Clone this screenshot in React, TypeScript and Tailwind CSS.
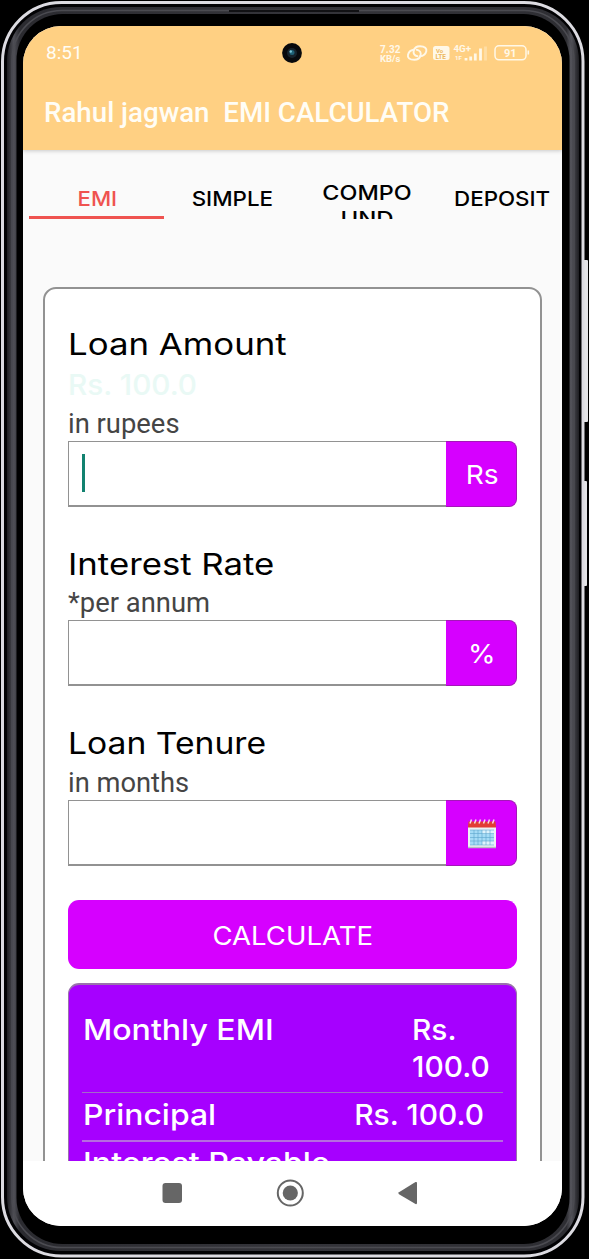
import React from "react";

const FrameSvg = () => (
  <svg className="absolute inset-0 pointer-events-none" width="589" height="1259" viewBox="0 0 589 1259" fill="none">
    <defs>
      <linearGradient id="rail" x1="7" x2="579" y1="0" y2="0" gradientUnits="userSpaceOnUse">
        <stop offset="0" stopColor="#1e1e22" />
        <stop offset=".012" stopColor="#505057" />
        <stop offset=".022" stopColor="#2b2b30" />
        <stop offset=".5" stopColor="#34343a" />
        <stop offset=".978" stopColor="#2e2e33" />
        <stop offset=".986" stopColor="#55555c" />
        <stop offset="1" stopColor="#1e1e22" />
      </linearGradient>
    </defs>
    <rect x="583" y="260" width="5" height="162" rx="1" fill="#e4e4e7" />
    <rect x="583" y="481" width="4" height="105" rx="1" fill="#e4e4e7" />
    <rect x="2.500" y="2.500" width="580.500" height="1253.500" rx="59" fill="#020204" stroke="#dcdbe1" strokeWidth="3" />
    <rect x="7" y="7" width="572" height="1244" rx="54" fill="url(#rail)" />
    <rect x="16.500" y="14" width="553" height="1230" rx="46" fill="#000" />
    <rect x="12" y="10.500" width="562" height="1237" rx="50" stroke="#4b4b51" strokeWidth="1.500" />
    <path d="M229 11h130" stroke="#111114" strokeWidth="2" />
  </svg>
);

const StatusIcons = () => (
  <svg width="152" height="22" viewBox="379 42 152 22" fill="none" stroke="#fff8e8">
    <g fill="#fff8e8" stroke="none" fontFamily="Roboto" fontWeight="700">
      <text x="380" y="53" fontSize="10" textLength="20.500">7.32</text>
      <text x="380" y="62" fontSize="9" textLength="20.500" lengthAdjust="spacingAndGlyphs">KB/s</text>
      <text x="453.500" y="52" fontSize="9.500" textLength="17.500" lengthAdjust="spacingAndGlyphs">4G+</text>
      <text x="455" y="60" fontSize="6">1F</text>
      <text x="504" y="57" fontSize="11" textLength="12.500">91</text>
    </g>
    <g strokeWidth="1.900" strokeLinecap="round">
      <path d="M417.500 56.300C411 55 413 46.300 420 46.300c5 0 7 2.200 6.300 5c-.6 2.500-2.800 4.800-6.300 5" />
      <path d="M416.800 49.800C423.300 51 421.300 59.800 414.300 59.800c-5 0-7-2.200-6.300-5c.6-2.500 2.300-4.500 5.500-5" />
    </g>
    <rect x="433" y="46" width="16.500" height="14" rx="2.500" fill="#fff8e8" stroke="none" />
    <g fill="#edb85f" stroke="none" fontFamily="Roboto" fontWeight="700">
      <text x="436" y="52.500" fontSize="6">Vo</text>
      <text x="435.500" y="59" fontSize="6.500">LTE</text>
    </g>
    <g strokeWidth="2.800">
      <path d="M466 60.500v-2.500M470.700 60.500v-4M475.300 60.500v-7M480.500 60.500v-12" />
      <path d="M485.500 60.500v-14" opacity=".35" />
    </g>
    <rect x="495" y="45.800" width="31" height="14" rx="4" strokeWidth="1.500" />
    <path d="M528.300 50.500v4" strokeWidth="1.600" />
  </svg>
);

const CalendarIcon = () => (
  <svg width="30" height="30" viewBox="0 0 30 30">
    <path d="M1 8h28v20.500H1z" fill="#eef2f5" />
    <path d="M1.500 2.500h27l.5 6H1z" fill="#e23c34" />
    <path d="M3 11h24v15H3z" fill="#a5dcf6" />
    <path d="M15 11h12v4H15zM15 22h12v4H15z" fill="#def3fc" />
    <path d="M3 11h24M3 14.500h24M3 18.500h24M3 22h24M3 26h24M7 11v15M11 11v15M15 11v15M19 11v15M23 11v15" stroke="#5aa5cc" strokeWidth=".6" />
    <path d="M3 4.500l1.500-4M7.500 4.500l1.500-4M12 4.500l1.500-4M16.500 4.500l1.500-4M21 4.500l1.500-4M25.500 4.500l1.500-4" stroke="#f4dce6" strokeWidth="1.500" />
    <path d="M1 28.500h28" stroke="#b7bcc4" strokeWidth="1.500" />
  </svg>
);

const Field = ({ children, focused }: { children: React.ReactNode; focused?: boolean }) => (
  <div className="flex h-[66px] w-[449px]">
    <div className="flex w-[378px] items-center border border-b-2 border-r-0 border-[#929292] pl-[13px]">
      {focused && <div className="mb-[2px] h-[38px] w-[3px] bg-[#128270]" />}
    </div>
    <div className="flex w-[71px] items-center justify-center rounded-r-lg border border-l-0 border-[#a316b8] bg-[#d600ff] pl-[2px] pt-px text-[26px] text-white">
      {children}
    </div>
  </div>
);

export default function App() {
  return (
    <div className="relative h-[1259px] w-[589px] overflow-hidden bg-black pl-[23px] pt-[26px] font-['Inter',sans-serif]">
      <FrameSvg />
      <div className="relative flex h-[1199.500px] w-[539px] flex-col overflow-hidden rounded-[38px] bg-[#fafafa]">
        <header className="relative z-10 h-[124px] shrink-0 bg-[#ffd083] font-['Roboto',sans-serif] text-[#fffdf5] shadow-[0_1px_4px_rgba(0,0,0,0.2)]">
          <div className="flex h-[54px] items-center justify-between pl-[23px] pr-[31px]">
            <span className="pt-px text-[19px]">8:51</span>
            <StatusIcons />
          </div>
          <svg className="absolute left-[259px] top-[17px]" width="20" height="20" viewBox="0 0 20 20">
            <circle cx="10" cy="10" r="9.900" fill="#08090c" />
            <circle cx="10" cy="10" r="5" fill="#17232c" />
            <circle cx="10" cy="9.500" r="2.500" fill="#1f6075" />
            <circle cx="8.700" cy="8.500" r="1.200" fill="#7cc6d8" />
          </svg>
          <h1 className="whitespace-pre pl-[21px] pt-[15px] text-[27.700px] font-medium leading-9">Rahul jagwan  EMI CALCULATOR</h1>
        </header>

        <nav className="flex h-[69px] shrink-0 items-stretch overflow-hidden pl-[6px] pt-[22px] text-[20.500px] font-medium leading-[26px] text-black">
          <div className="flex w-[135px] shrink-0 items-center justify-center border-b-[3px] border-[#ef5350] pl-px pt-[9px] text-[#ef5350]"><span className="scale-x-[1.080]">EMI</span></div>
          <div className="flex w-[135px] shrink-0 items-center justify-center pl-[2px] pt-[6px]"><span className="scale-x-[1.090]">SIMPLE</span></div>
          <div className="w-[135px] shrink-0 pl-px pt-[8px] text-center"><div className="scale-x-[1.140]">COMPO</div><div className="scale-x-[1.170]">UND</div></div>
          <div className="flex w-[135px] shrink-0 items-center justify-center pl-[2px] pt-[6px]"><span className="scale-x-[1.090]">DEPOSIT</span></div>
        </nav>

        <main className="min-h-0 flex-1 overflow-hidden pl-5 pt-[68px]">
          <section className="h-[1000px] w-[499px] rounded-[13px] border-2 border-[#929292] bg-white pl-[23px] pt-[35px]">
            <h2 className="h-[40px] w-max origin-left scale-x-[1.160] text-[30px] leading-[40px] text-black">Loan Amount</h2>
            <p className="h-[40px] w-max origin-left scale-x-[1.060] text-[28px] font-medium leading-[42px] text-[#e9f9f5]">Rs. 100.0</p>
            <p className="h-[37px] font-['Roboto',sans-serif] text-[27.400px] leading-[40px] text-[#454545]">in rupees</p>
            <Field focused><span className="scale-x-[1.080]">Rs</span></Field>
            <h2 className="mt-[36px] h-[40px] w-max origin-left scale-x-[1.158] text-[30px] leading-[42px] text-black">Interest Rate</h2>
            <p className="h-[37px] font-['Roboto',sans-serif] text-[27.400px] leading-[41px] text-[#454545]">*per annum</p>
            <Field><span className="scale-x-[1.080]">%</span></Field>
            <h2 className="mt-[37px] h-[40px] w-max origin-left scale-x-[1.122] text-[30px] leading-[40px] text-black">Loan Tenure</h2>
            <p className="h-[37px] font-['Roboto',sans-serif] text-[27.300px] leading-[40px] text-[#454545]">in months</p>
            <Field><CalendarIcon /></Field>
            <button className="mt-[34px] flex h-[69px] w-[449px] items-center justify-center rounded-[11px] bg-[#d600ff] text-[26px] text-white">
              <span className="scale-x-[1.060] pt-[2px]">CALCULATE</span>
            </button>
            <div className="mt-[14px] h-[300px] w-[449px] rounded-[11px] border border-t-2 border-[#9a72ad] bg-[#a600ff] px-[13px] pt-[26px] text-[29px] font-medium text-white">
              <div className="flex h-[82px] justify-between border-b border-[#a26cc8] pl-px pr-[13px] leading-[37px]">
                <span className="origin-left scale-x-[1.105]">Monthly EMI</span>
                <span className="w-[78px] origin-left scale-x-[1.030]"><span className="block">Rs.</span><span className="block">100.0</span></span>
              </div>
              <div className="flex h-[49px] justify-between border-b-2 border-[#b66be0] pl-px pr-[19px] leading-[44px]">
                <span className="origin-left scale-x-[1.100]">Principal</span><span className="origin-right scale-x-[1.030]">Rs. 100.0</span>
              </div>
              <div className="w-max origin-left scale-x-[1.108] pl-px leading-[41px]">Interest Payable</div>
            </div>
          </section>
        </main>

        <footer className="h-[65px] shrink-0 bg-white">
          <svg width="539" height="65" viewBox="23 1161 539 65" fill="#666">
            <rect x="162.500" y="1183" width="19.500" height="20" rx="3" />
            <circle cx="290.300" cy="1193" r="12.500" fill="none" stroke="#666" strokeWidth="2" />
            <circle cx="290.300" cy="1193" r="7.600" />
            <path d="M399 1192.300l16.500-10.200q1.500-.6 1.500 1v20q0 1.600-1.500 1L399 1194.300q-1.300-1 0-2z" />
          </svg>
        </footer>
      </div>
    </div>
  );
}
